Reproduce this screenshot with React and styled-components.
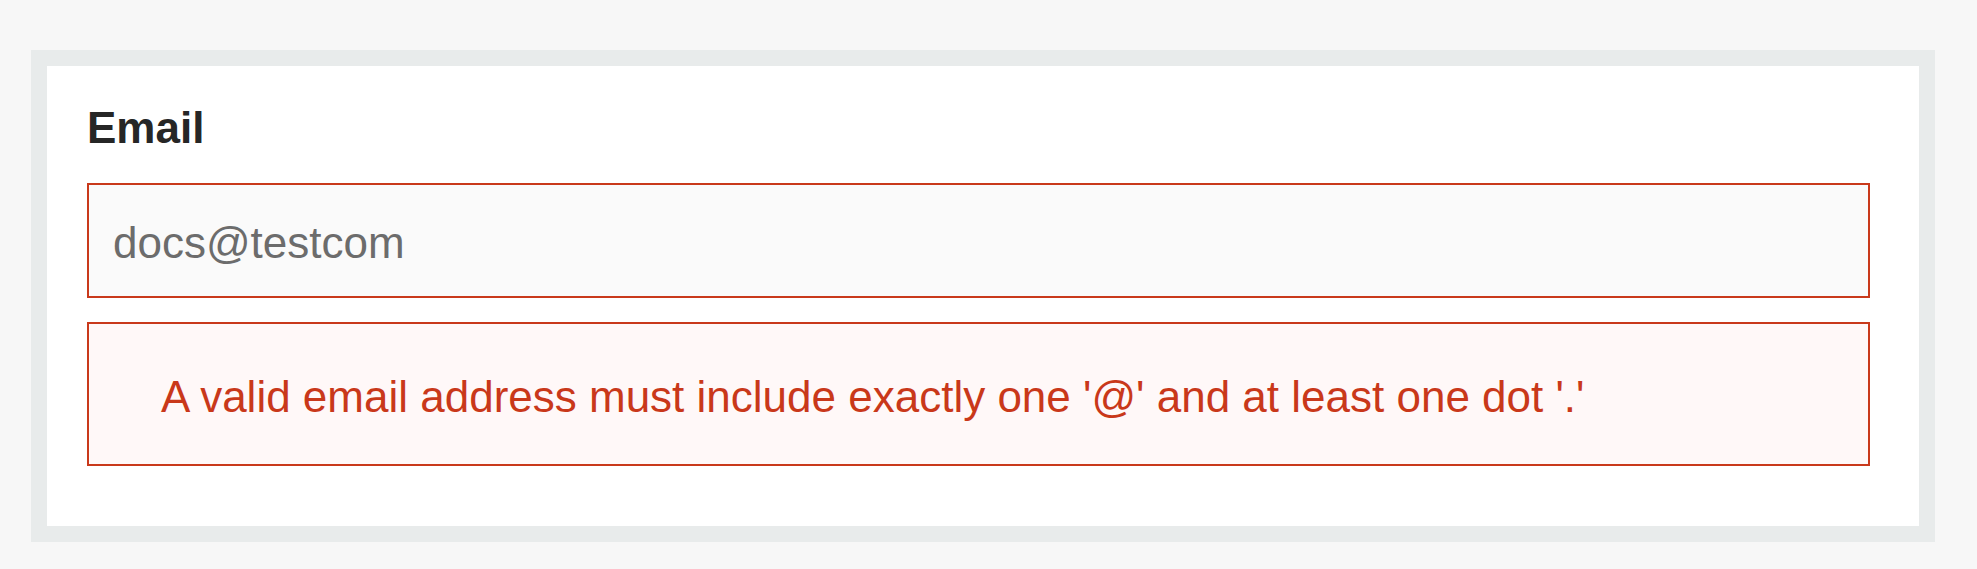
import React from 'react';
import styled, { createGlobalStyle } from 'styled-components';

const GlobalStyle = createGlobalStyle`
  html, body {
    margin: 0;
    padding: 0;
    background: #f7f7f7;
    font-family: "Liberation Sans", Arial, sans-serif;
  }
`;

const Page = styled.div`
  padding: 50px 42px 27px 31px;
`;

const Frame = styled.div`
  border: 16px solid #e8ebeb;
  background: #ffffff;
  padding: 36px 49px 60px 40px;
`;

const FieldLabel = styled.label`
  display: block;
  color: #262626;
  font-size: 44px;
  font-weight: bold;
  line-height: 52px;
  margin-bottom: 29px;
`;

const EmailInput = styled.input`
  display: block;
  box-sizing: border-box;
  width: 100%;
  height: 115px;
  margin: 0 0 24px;
  padding: 4px 24px 0;
  border: 2px solid #c9391b;
  border-radius: 0;
  background: #fafafa;
  color: #6c6c6c;
  font-family: "Liberation Sans", Arial, sans-serif;
  font-size: 44px;
  outline: none;
`;

const ErrorBox = styled.div`
  border: 2px solid #c9391b;
  background: #fff8f8;
  color: #c9381a;
  font-size: 44px;
  line-height: 52px;
  padding: 47px 24px 41px 72px;
`;

export default function App() {
  return (
    <>
      <GlobalStyle />
      <Page>
        <Frame>
          <FieldLabel htmlFor="email">Email</FieldLabel>
          <EmailInput id="email" type="text" defaultValue="docs@testcom" aria-invalid="true" />
          <ErrorBox role="alert">
            A valid email address must include exactly one '@' and at least one dot '.'
          </ErrorBox>
        </Frame>
      </Page>
    </>
  );
}
